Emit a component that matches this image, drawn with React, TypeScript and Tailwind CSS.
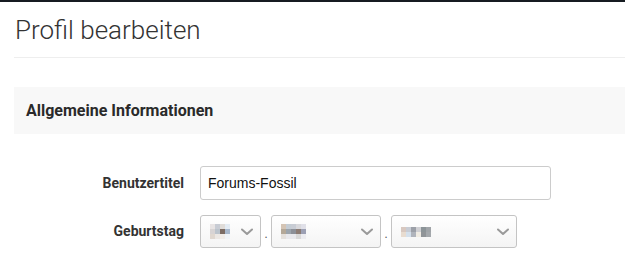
import React from "react";

const Chevron = () => (
  <svg width="12" height="8" viewBox="0 0 12 8" fill="none">
    <path d="M1 1.5 L6 6 L11 1.5" stroke="#9a9a9a" strokeWidth="2" strokeLinecap="round" strokeLinejoin="round" />
  </svg>
);

const Pixels = ({ rows }: { rows: string[][] }) => (
  <div className="flex flex-col">
    {rows.map((r, i) => (
      <div key={i} className="flex">
        {r.map((c, j) => (
          <div key={j} className="w-[5px] h-[5px]" style={{ background: c }} />
        ))}
      </div>
    ))}
  </div>
);

const Select = ({ w, rows }: { w: string; rows: string[][] }) => (
  <div
    className={`${w} h-[33px] flex items-center justify-between pl-[9px] pr-[7px] border border-[#c4c4c4] rounded-[3px] bg-gradient-to-b from-white to-[#f4f4f4]`}
  >
    <Pixels rows={rows} />
    <Chevron />
  </div>
);

export default function App() {
  return (
    <div className="w-[625px] h-[262px] bg-white overflow-hidden font-['Roboto',sans-serif] text-[#333]">
      <div className="h-[2px] bg-[#161b21]" />
      <div className="pl-[14px]">
        <h1 className="pt-[13px] pl-[1px] text-[26px] leading-[30px] font-light text-[#333]">
          Profil bearbeiten
        </h1>
        <div className="mt-[12px] h-[1px] bg-[#eeeeee]" />
        <div className="mt-[29px] h-[47px] bg-[#f8f8f8] flex items-center pl-[12px]">
          <span className="text-[16px] font-bold text-[#2a2a2a]">Allgemeine Informationen</span>
        </div>
        <div className="mt-[32px] flex flex-col gap-[15px]">
          <div className="flex items-center">
            <label className="w-[170px] text-right text-[14px] font-bold text-[#333]">Benutzertitel</label>
            <div className="ml-[16px] w-[351px] h-[34px] border border-[#cccccc] rounded-[3px] flex items-center pl-[7px] font-['Liberation_Sans',Arial,sans-serif] text-[14px] text-[#111]">
              Forums-Fossil
            </div>
          </div>
          <div className="flex items-center">
            <label className="w-[170px] text-right text-[14px] font-bold text-[#333]">Geburtstag</label>
            <div className="ml-[16px] flex items-center">
              <Select
                w="w-[61px]"
                rows={[
                  ["#e8e4e4", "#c8ccd4", "#e0dcd8", "#e4ecf4"],
                  ["#d8d4d4", "#bcc4cc", "#7c6c64", "#a8b8cc"],
                  ["#e0d8d0", "#ece8e4", "#f0ece8", "#f0f4f8"],
                ]}
              />
              <span className="w-[10px] text-center text-[12px] text-[#555] leading-none pt-[4px]">.</span>
              <Select
                w="w-[110px]"
                rows={[
                  ["#d4c4b4", "#c4ccd4", "#c8ccd4", "#d8d8dc", "#e0e0e8"],
                  ["#b4a898", "#9ca4ac", "#8c9098", "#8c7c74", "#9ca0b4"],
                  ["#e4e0dc", "#e8e8ec", "#e8e8ec", "#d8d8d8", "#ececf0"],
                ]}
              />
              <span className="w-[10px] text-center text-[12px] text-[#555] leading-none pt-[4px]">.</span>
              <Select
                w="w-[126px]"
                rows={[
                  ["#d8c8c0", "#c8ccd4", "#9ca0a8", "#d0d0d4", "#8c9498", "#a0a4a8"],
                  ["#e8dcd0", "#d4e0ec", "#b0b4bc", "#f0ece4", "#909498", "#a4a8ac"],
                ]}
              />
            </div>
          </div>
        </div>
      </div>
    </div>
  );
}
